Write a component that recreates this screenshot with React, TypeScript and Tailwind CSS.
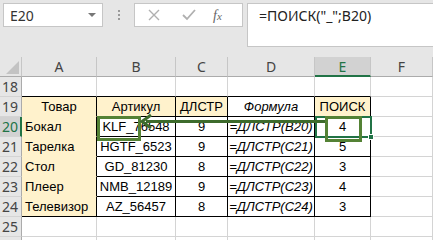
import React from 'react';

type Cell = { text: string; fill?: boolean; italic?: boolean; align?: 'left' | 'center' };

const COLS = ['A', 'B', 'C', 'D', 'E', 'F'];
const WIDTHS = ['w-[75px]', 'w-[79px]', 'w-[52px]', 'w-[87px]', 'w-[56px]', 'flex-1'];

const TABLE: Record<number, Cell[]> = {
  19: [
    { text: 'Товар', fill: true },
    { text: 'Артикул', fill: true },
    { text: 'ДЛСТР', fill: true },
    { text: 'Формула', italic: true },
    { text: 'ПОИСК', fill: true },
  ],
  20: [
    { text: 'Бокал', fill: true, align: 'left' },
    { text: 'KLF_76548' },
    { text: '9' },
    { text: '=ДЛСТР(B20)', italic: true },
    { text: '4' },
  ],
  21: [
    { text: 'Тарелка', fill: true, align: 'left' },
    { text: 'HGTF_6523' },
    { text: '9' },
    { text: '=ДЛСТР(C21)', italic: true },
    { text: '5' },
  ],
  22: [
    { text: 'Стол', fill: true, align: 'left' },
    { text: 'GD_81230' },
    { text: '8' },
    { text: '=ДЛСТР(C22)', italic: true },
    { text: '3' },
  ],
  23: [
    { text: 'Плеер', fill: true, align: 'left' },
    { text: 'NMB_12189' },
    { text: '9' },
    { text: '=ДЛСТР(C23)', italic: true },
    { text: '4' },
  ],
  24: [
    { text: 'Телевизор', fill: true, align: 'left' },
    { text: 'AZ_56457' },
    { text: '8' },
    { text: '=ДЛСТР(C24)', italic: true },
    { text: '3' },
  ],
};

const ROWS = [18, 19, 20, 21, 22, 23, 24, 25, 26];

function cellBorder(row: number, col: number) {
  // col: 0..5 (A..F)
  const inTable = row >= 19 && row <= 24 && col <= 4;
  let r = 'border-r-[#d4d4d4]';
  let b = 'border-b-[#d4d4d4]';
  if (inTable) {
    r = 'border-r-black';
    if (col === 0 && row < 24) b = 'border-b-[#fff2cc]';
    else b = 'border-b-black';
  }
  if (row === 18 && col <= 4) b = 'border-b-black';
  return `border-r border-b ${r} ${b}`;
}

function GridRow({ row }: { row: number }) {
  const active = row === 20;
  const data = TABLE[row];
  return (
    <div className="flex h-[20px]">
      <div
        className={`w-[22px] shrink-0 flex items-center pl-[2px] text-[14px] font-['Noto_Sans',sans-serif] border-b border-b-[#d4d4d4] ${
          active
            ? 'bg-[#d2d2d2] text-[#217346] border-r-2 border-r-[#217346]'
            : 'bg-[#e6e6e6] text-[#444] border-r border-r-[#ababab]'
        }`}
      >
        {row < 26 ? row : ''}
      </div>
      {COLS.map((c, i) => {
        const cell = data && i < 5 ? data[i] : undefined;
        return (
          <div
            key={c}
            className={`${WIDTHS[i]} shrink-0 flex items-center overflow-visible whitespace-nowrap ${cellBorder(row, i)} ${
              cell?.fill ? 'bg-[#fff2cc]' : 'bg-white'
            } ${cell?.align === 'left' ? 'justify-start pl-[3px]' : 'justify-center'} ${cell?.italic ? 'italic' : ''}`}
          >
            {cell?.text}
          </div>
        );
      })}
    </div>
  );
}

export default function App() {
  return (
    <div className="relative w-[433px] h-[240px] overflow-hidden bg-white font-['Liberation_Sans',Arial,sans-serif] text-[13px] text-black">
      {/* Formula bar */}
      <div className="h-[57px] bg-[#e6e6e6] flex items-start pt-[3px] pl-[3px] font-['Noto_Sans',sans-serif]">
        <div className="w-[100px] h-[24px] bg-white border border-[#c6c6c6] flex items-center justify-between pl-[6px] pr-[6px] text-[14px] text-[#333]">
          <span>E20</span>
          <span className="w-0 h-0 border-l-[4px] border-r-[4px] border-t-[4px] border-l-transparent border-r-transparent border-t-[#777]" />
        </div>
        <div className="w-[31px] h-[24px] flex flex-col items-center justify-center gap-[2px]">
          <span className="w-[2px] h-[2px] bg-[#9a9a9a]" />
          <span className="w-[2px] h-[2px] bg-[#9a9a9a]" />
          <span className="w-[2px] h-[2px] bg-[#9a9a9a]" />
        </div>
        <div className="w-[109px] h-[24px] bg-white border border-[#c6c6c6] flex items-center">
          <svg width="14" height="14" viewBox="0 0 14 14" className="ml-[12px]">
            <path d="M2 2 L12 12 M12 2 L2 12" stroke="#b0b0b0" strokeWidth="1.4" fill="none" />
          </svg>
          <svg width="16" height="14" viewBox="0 0 16 14" className="ml-[20px]">
            <path d="M2 7 L6 11 L14 2" stroke="#b0b0b0" strokeWidth="1.8" fill="none" />
          </svg>
          <span className="ml-[16px] text-[14px] italic text-[#666] font-['Liberation_Serif',serif]">
            f<span className="text-[11px]">x</span>
          </span>
        </div>
        <div className="ml-[4px] flex-1 h-[44px] bg-white border border-[#c6c6c6] border-r-0 pl-[11px] pt-[1px] text-[14px] text-[#222]">
          =ПОИСК("_";B20)
        </div>
      </div>

      {/* Column headers */}
      <div className="flex h-[20px] text-[#444] font-['Noto_Sans',sans-serif] text-[14px]">
        <div className="w-[22px] shrink-0 bg-[#e6e6e6] border-r border-b border-r-[#c6c6c6] border-b-[#ababab] flex items-end justify-end pr-[2px] pb-[2px]">
          <svg width="13" height="13" viewBox="0 0 13 13">
            <path d="M13 0 L13 13 L0 13 Z" fill="#c3c3c3" />
          </svg>
        </div>
        {COLS.map((c, i) => (
          <div
            key={c}
            className={`${WIDTHS[i]} shrink-0 flex items-center justify-center border-r border-r-[#c6c6c6] ${
              c === 'E'
                ? 'bg-[#d2d2d2] text-[#217346] border-b-2 border-b-[#217346]'
                : 'bg-[#e6e6e6] border-b border-b-[#ababab]'
            }`}
          >
            {c}
          </div>
        ))}
      </div>

      {ROWS.map((r) => (
        <GridRow key={r} row={r} />
      ))}

      {/* Selection on E20 */}
      <div className="absolute left-[315px] top-[116px] w-[57px] h-[22px] border-2 border-[#217346]" />
      <div className="absolute left-[368px] top-[134px] w-[6px] h-[6px] bg-[#217346] border border-white" />

      {/* Green callout boxes and arrow */}
      <div className="absolute left-[97px] top-[116px] w-[44px] h-[25px] border-[3px] border-[#548235]" />
      <div className="absolute left-[325px] top-[116px] w-[37px] h-[26px] border-[3px] border-[#548235]" />
      <svg className="absolute left-0 top-0" width="433" height="240" viewBox="0 0 433 240">
        <path d="M325 121.5 L146 121.5" stroke="#3d6b2c" strokeWidth="3" fill="none" />
        <path d="M151 115 L142 121.5 L151 128" stroke="#3d6b2c" strokeWidth="3" fill="none" />
      </svg>
    </div>
  );
}
